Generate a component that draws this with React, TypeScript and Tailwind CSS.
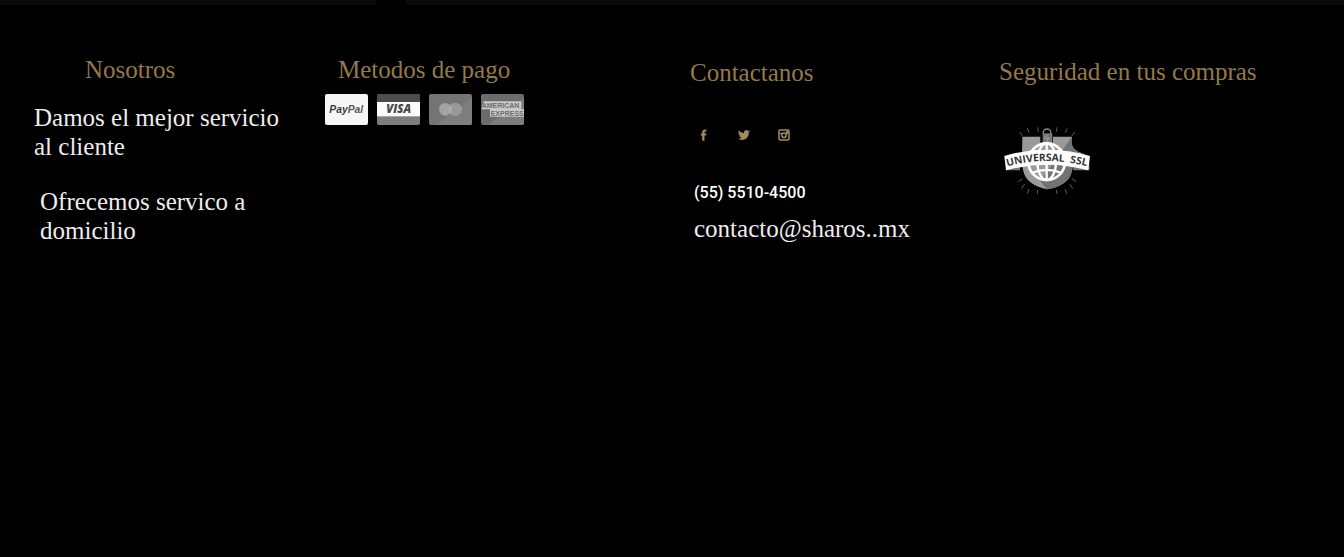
import type { ReactNode } from 'react';

const serif = "font-['Liberation_Serif',serif]";

function Heading({ children, className = '' }: { children: ReactNode; className?: string }) {
  return <h2 className={`text-[25px] leading-7 whitespace-nowrap text-[#94794a] ${className}`}>{children}</h2>;
}

function PayPalCard() {
  return (
    <svg viewBox="0 0 129 93" className="h-[31px] w-[43px]" role="img" aria-label="PayPal">
      <rect width="129" height="93" rx="6" fill="#f6f6f6" />
      <text x="13" y="56" fontFamily="Liberation Sans, sans-serif" fontSize="31" fontWeight="700" fontStyle="italic">
        <tspan fill="#3c3c3c">Pay</tspan>
        <tspan fill="#585858">Pal</tspan>
      </text>
    </svg>
  );
}

function VisaCard() {
  return (
    <svg viewBox="0 0 129 93" className="h-[31px] w-[43px]" role="img" aria-label="Visa">
      <rect width="129" height="93" rx="6" fill="#7d7d7d" />
      <path d="M0 24V6a6 6 0 0 1 6-6h117a6 6 0 0 1 6 6v18z" fill="#4c4c4c" />
      <rect y="24" width="129" height="43" fill="#fbfbfb" />
      <text x="65" y="57" textAnchor="middle" fontFamily="Open Sans, sans-serif" fontSize="34" fontWeight="800" fontStyle="italic" fill="#484848">
        VISA
      </text>
    </svg>
  );
}

function MasterCard() {
  return (
    <svg viewBox="0 0 129 93" className="h-[31px] w-[43px]" role="img" aria-label="Mastercard">
      <rect width="129" height="93" rx="6" fill="#747474" />
      <path d="M129 12v75a6 6 0 0 1-6 6H22z" fill="#7e7e7e" />
      <circle cx="49" cy="46" r="19" fill="#a2a2a2" />
      <circle cx="79" cy="46" r="20" fill="#999" />
      <path d="M64 33a20 20 0 0 1 0 26a20 20 0 0 1 0-26" fill="#adadad" />
    </svg>
  );
}

function AmexCard() {
  return (
    <svg viewBox="0 0 129 93" className="h-[31px] w-[43px]" role="img" aria-label="American Express">
      <rect width="129" height="93" rx="6" fill="#6c6c6c" />
      <path d="M129 12v75a6 6 0 0 1-6 6H22z" fill="#7c7c7c" />
      <path d="M8 22h113v24h8v22H27V46H1z" fill="#c9c9c9" />
      <g fontFamily="Liberation Sans, sans-serif" fontSize="21" fontWeight="700" fill="#6d6d6d">
        <text x="2" y="42">AMERICAN</text>
        <text x="29" y="65">EXPRESS</text>
      </g>
    </svg>
  );
}

function UniversalSsl() {
  return (
    <svg viewBox="24 33 264 213" className="h-[71px] w-[88px]" role="img" aria-label="Universal SSL">
      <path
        d="M97 39l5 14M128 37l2 13M184 50l2-13M211 53l5-13M74 51l8 11M230 63l9-12M256 114l14 4M70 200l12-9M80 221l9-14M97 236l5-14M128 225l-1 12M184 225l2 12M210 222l6 15M224 207l10 14M231 191l12 9"
        stroke="#8c8c8c"
        strokeWidth="2"
        fill="none"
      />
      <path d="M82 65h54v18h38V65h57c-5 28 4 40 28 49-12 18-24 29-29 57-6 28-36 47-74 52-37-7-66-26-72-58-5-27-2-58-2-100z" fill="#9a9a9a" />
      <path d="M231 65c-5 28 4 40 28 49-12 18-24 29-29 57-6 28-36 47-74 52l-20-25z" fill="#737373" />
      <path d="M145 57v-5a11 10 0 0 1 22 0v5" fill="none" stroke="#888" strokeWidth="4" />
      <path d="M143 55h29v33h-29z" fill="#777" />
      <path d="M157 59l-8 12 12-2-6 13" fill="none" stroke="#b4b4b4" strokeWidth="2" />
      <g fill="none" stroke="#fff" strokeWidth="7">
        <circle cx="155" cy="140" r="55" strokeWidth="8" />
        <ellipse cx="155" cy="140" rx="28" ry="55" />
        <path d="M155 85v110M112 106q43 17 86 0M110 174q45-19 90 0" />
      </g>
      <path d="M33 150h42v16H33zM235 150h48v16h-48z" fill="#777" />
      <path d="M28 123Q90 104 156 104T285 123L280 166Q218 149 156 149T33 166z" fill="#fff" />
      <path id="ssl-ribbon" d="M37 155Q94 138 156 138T280 155" fill="none" />
      <text fontFamily="Open Sans, sans-serif" fontSize="31" fontWeight="700" fill="#373737">
        <textPath href="#ssl-ribbon">UNIVERSAL</textPath>
      </text>
      <text fontFamily="Open Sans, sans-serif" fontSize="31" fontWeight="700" fill="#373737" textAnchor="end">
        <textPath href="#ssl-ribbon" startOffset="98%">SSL</textPath>
      </text>
    </svg>
  );
}

function FacebookIcon() {
  return (
    <svg viewBox="0 0 12 12" className="size-3" fill="currentColor" aria-hidden="true">
      <path d="M4.2 11.7V6.6H2.8V4.5h1.4V3.3C4.2 1.5 5.3.5 6.9.5h1.5v2H7.3c-.6 0-.8.3-.8.9v1.1h1.9l-.3 2.1H6.5v5.1z" />
    </svg>
  );
}

function TwitterIcon() {
  return (
    <svg viewBox="0 0 24 24" className="size-3" fill="currentColor" aria-hidden="true">
      <path d="M23.95 4.57a10 10 0 0 1-2.82.78 4.96 4.96 0 0 0 2.16-2.73c-.95.56-2 .96-3.13 1.19a4.92 4.92 0 0 0-8.38 4.48C7.69 8.1 4.07 6.13 1.64 3.16a4.92 4.92 0 0 0 1.52 6.57 4.9 4.9 0 0 1-2.23-.61v.06a4.92 4.92 0 0 0 3.95 4.83 5 5 0 0 1-2.21.08 4.94 4.94 0 0 0 4.6 3.42A9.87 9.87 0 0 1 0 19.54a14 14 0 0 0 7.55 2.21c9.05 0 14-7.5 14-13.98 0-.21 0-.42-.02-.63a9.9 9.9 0 0 0 2.42-2.57z" />
    </svg>
  );
}

function InstagramIcon() {
  return (
    <svg viewBox="0 0 12 12" className="size-3" aria-hidden="true">
      <rect x="1" y="1" width="10" height="10" rx="1" fill="none" stroke="currentColor" strokeWidth="1.5" />
      <path d="M1 4.4h3M8 4.4h3" stroke="currentColor" strokeWidth="1" />
      <circle cx="6" cy="6.2" r="2.2" fill="none" stroke="currentColor" strokeWidth="1.5" />
      <rect x="8" y="2" width="2" height="2" fill="currentColor" />
    </svg>
  );
}

export default function App() {
  return (
    <div className={`min-h-screen bg-black ${serif}`}>
      <div className="flex h-[5px] gap-[30px]">
        <div className="w-[28%] bg-[#0b0b0b]" />
        <div className="flex-1 bg-[#0b0b0b]" />
      </div>
      <footer className="grid grid-cols-[290fr_366fr_309fr_345fr] pt-[51px] pl-[34px]">
        <section>
          <Heading className="pl-[51px]">Nosotros</Heading>
          <p className="mt-[19px] text-[25px] leading-[29px] text-[#ededed]">
            Damos el mejor servicio
            <br />
            al cliente
          </p>
          <p className="mt-[26px] pl-1.5 text-[25px] leading-[29px] text-[#ededed]">
            Ofrecemos servico a
            <br />
            domicilio
          </p>
        </section>

        <section>
          <Heading className="pl-3.5">Metodos de pago</Heading>
          <div className="mt-2.5 ml-px flex gap-[9px]">
            <PayPalCard />
            <VisaCard />
            <MasterCard />
            <AmexCard />
          </div>
        </section>

        <section className="pt-[3px]">
          <Heading>Contactanos</Heading>
          <nav className="mt-[42px] ml-2 flex gap-7 text-[#a08c60]">
            <a href="#facebook" aria-label="Facebook">
              <FacebookIcon />
            </a>
            <a href="#twitter" aria-label="Twitter">
              <TwitterIcon />
            </a>
            <a href="#instagram" aria-label="Instagram">
              <InstagramIcon />
            </a>
          </nav>
          <div className="mt-10 flex flex-col items-start gap-2.5 pl-1 text-white">
            <a href="tel:5555104500" className="font-[Roboto,sans-serif] text-base leading-6 font-medium">
              (55) 5510-4500
            </a>
            <a href="mailto:contacto@sharos..mx" className="text-[25px] leading-7 text-[#ededed]">
              contacto@sharos..mx
            </a>
          </div>
        </section>

        <section className="pt-0.5">
          <Heading>Seguridad en tus compras</Heading>
          <div className="mt-10 pl-1">
            <UniversalSsl />
          </div>
        </section>
      </footer>
    </div>
  );
}
